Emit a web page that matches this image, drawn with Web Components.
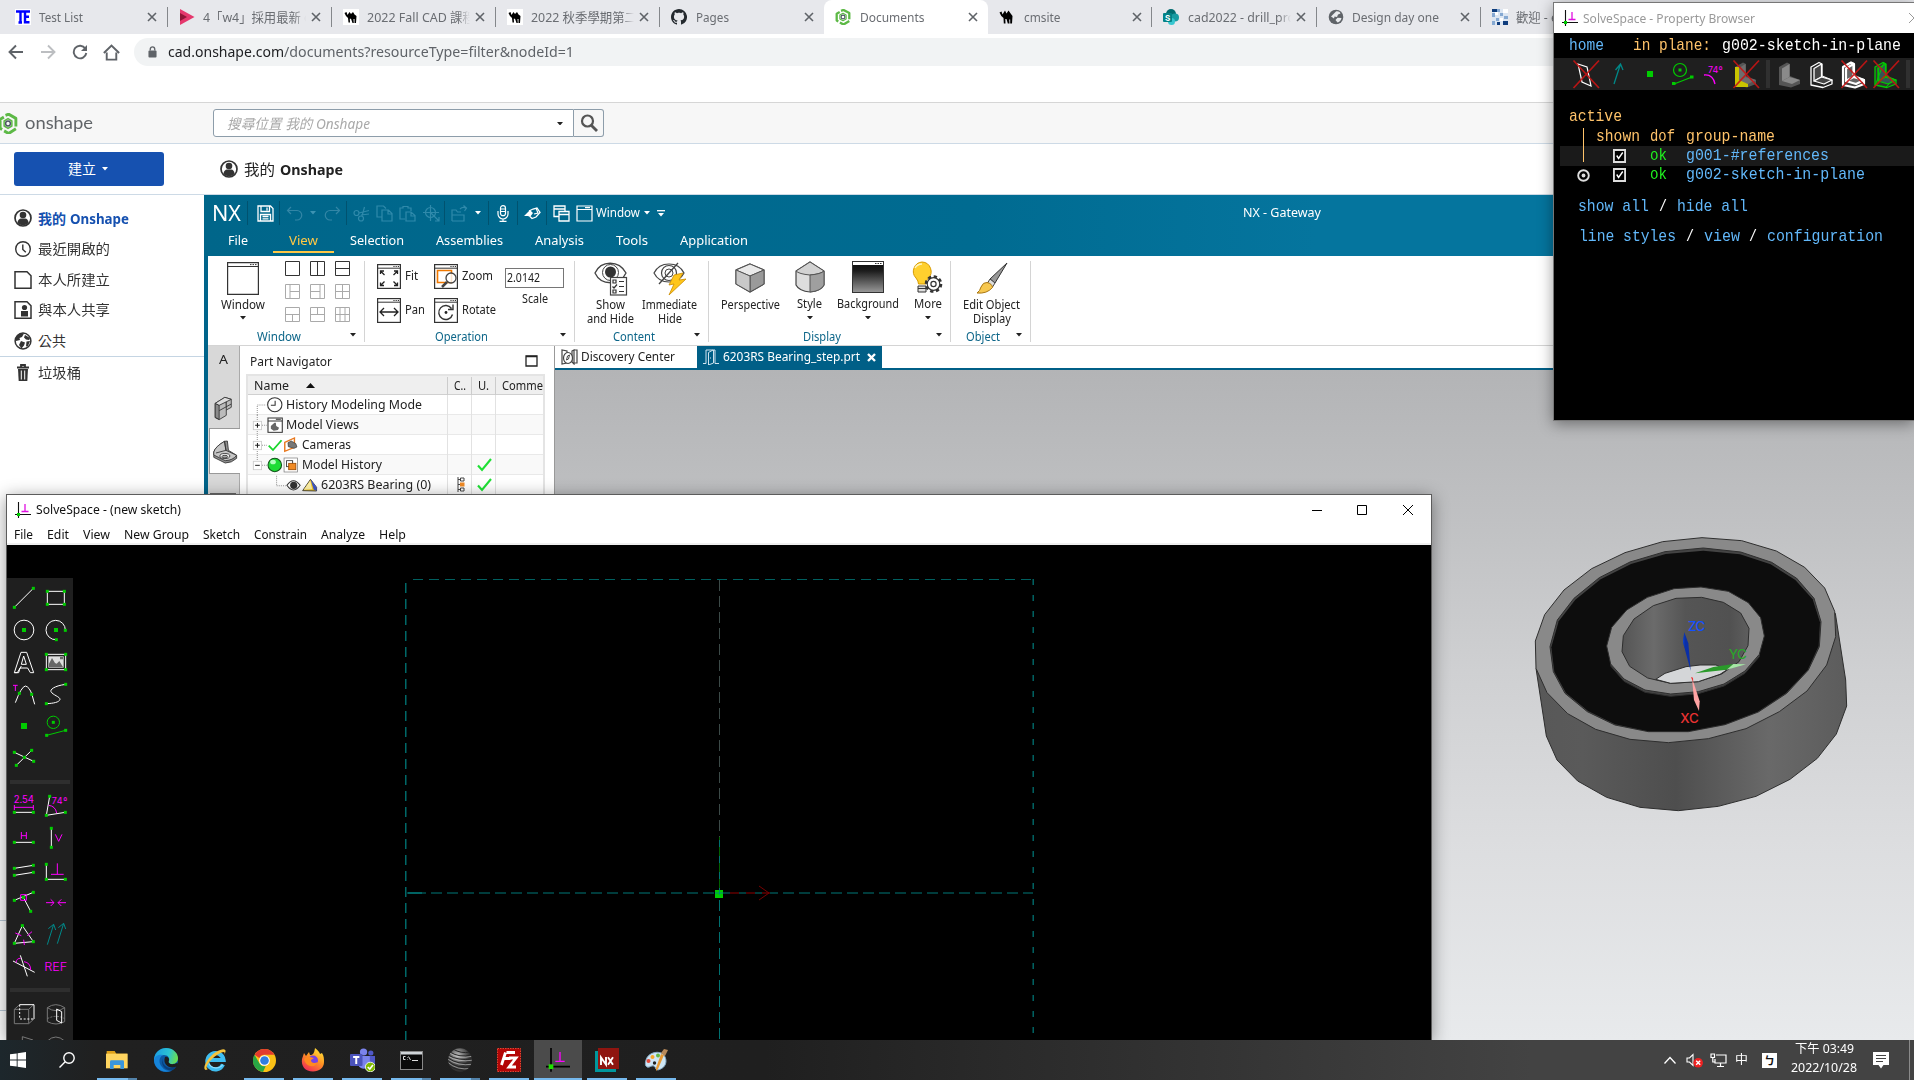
<!DOCTYPE html>
<html lang="zh-Hant">
<head>
<meta charset="utf-8">
<title>Documents</title>
<style>
html,body{margin:0;padding:0}
body{width:1914px;height:1080px;overflow:hidden;position:relative;background:#fff;font:12px/16px "Noto Sans","Noto Sans CJK TC",sans-serif;color:#222}
body>*{box-sizing:border-box}
chrome-window{width:1914px;height:1080px}
nx-window{position:absolute;left:204px;top:195px;width:1710px;height:845px}
sketch-window{position:absolute;left:6px;top:494px;width:1426px;height:546px}
property-window{position:absolute;left:1553px;top:2px;width:361px;height:419px}
task-bar{position:absolute;left:0;top:1040px;width:1914px;height:40px}
</style>
</head>
<body>
<chrome-window></chrome-window>
<nx-window></nx-window>
<sketch-window></sketch-window>
<property-window></property-window>
<task-bar></task-bar>
<script>
const BASE = `*{box-sizing:border-box}:host{display:block}.h{display:flex;align-items:center;flex:none}.v{display:flex;flex-direction:column;align-items:center;flex:none}.c{display:flex;align-items:center;flex:none}.top{align-items:flex-start}`;

/* ---------- layout helpers: cells laid end to end, gaps from start positions ---------- */
const cellHTML = (t, size) => /^\s*</.test(t) || t === '' ? t : `<fit-text w="${size}">${t}</fit-text>`;
const H = (origin, items, style = '', cls = '') => {
  let cur = origin;
  return `<div class="h ${cls}" style="${style}">` + items.map(([x, w, t, s = '']) => {
    const m = (x - cur).toFixed(2); cur = x + w;
    return `<div class="c" style="margin-left:${m}px;width:${w}px;${s}">${cellHTML(t, w)}</div>`;
  }).join('') + `</div>`;
};
const V = (origin, items, style = '') => {
  let cur = origin;
  return `<div class="v" style="${style}">` + items.map(([y, h, t, s = '']) => {
    const m = (y - cur).toFixed(2); cur = y + h;
    return `<div class="c" style="margin-top:${m}px;height:${h}px;${s}">${t}</div>`;
  }).join('') + `</div>`;
};
const F = (w, t, s = '') => `<fit-text w="${w}" style="${s}">${t}</fit-text>`;
const I = (n, s = '') => `<g-icon n="${n}" style="${s}"></g-icon>`;

/* ---------- icons: [viewBox, width, height, markup] ---------- */
const box = (x, y, w, h, sx, sy, d) => [`${x} ${y} ${w} ${h}`, w / sx, h / sy, d];
const W = 'fill="none" stroke="#fff" stroke-width="3"';
const M = 'fill="none" stroke="#f0f" stroke-width="3"';
const P = (...a) => { let s = ''; for (let i = 0; i < a.length; i += 2) s += `<rect x="${a[i] - 4.5}" y="${a[i + 1] - 4.5}" width="9" height="9" fill="#0c0"/>`; return s; };
const hexLogo = '<g fill="none" stroke-linejoin="round"><path d="M6 1.8 8.5.9l5.8 3.2v6.2M14.3 12l-5.8 3.6-3.6-2M3.3 12.6 1.7 11.6V4.8l3-1.7" stroke="#5db946" stroke-width="2.3"/><path d="M8 4.3l3.1 1.8v3.8L8 11.7l-3.1-1.8V6.1z" stroke="#5db946" stroke-width="1.2"/><circle cx="8" cy="8" r="1.9" stroke="#4b5563" stroke-width="1.1"/></g>';
const frame = (x, y, w, h) => `<rect x="${x}" y="${y}" width="${w}" height="${h}" fill="#fff" stroke="#333" stroke-width="1.2"/><path d="M${x} ${y + 3.6}h${w}" stroke="#333"/><path d="M${x + w - 7} ${y + 1.9}h1.2m1 0h1.2m1 0h1.2" stroke="#333"/>`;
const ICONS = {
  te: ['0 0 16 16', 16, 16, '<rect width="16" height="16" fill="#fff"/><path d="M1 2.500h14M5.500 2.500v11M3.500 13.500H7M14 7.800H9.500M10 3v10.300h4.500" stroke="#00f" stroke-width="2.400" fill="none"/>'],
  media: ['0 0 16 16', 16, 16, '<path d="M1 0 15.500 8 1 16z" fill="#e5386d"/><path d="M1 4v8l7-4z" fill="#8f1536"/>'],
  camelw: ['0 0 16 16', 16, 16, '<rect width="16" height="16" fill="#fff"/><path d="M1.500 4 3.500 3l1 3L6.500 3 8 5l2-2 1.500 2.500 2 1.500-.5 7h-1.500v-4h-1l.3 4H9.500L8 9.700H6.800L7 13.500H5.500L5 9 3 7z"/>'],
  camel: ['0 0 16 16', 16, 16, '<path d="M.5 3.500 2.500 2.500l1 3L6 1.500l1.500 3 2-3L12 5l1.500 2-.5 7.500h-1.800v-4h-1l.3 4H8.800L7.500 10H6.300l.2 4.500H4.800L4.500 9l-2.200-2z"/>'],
  github: ['0 0 16 16', 16, 16, '<path fill="#24292e" d="M8 0C3.580 0 0 3.580 0 8c0 3.540 2.290 6.530 5.470 7.590.4.070.55-.17.55-.38 0-.19-.01-.82-.01-1.490-2.010.37-2.530-.49-2.690-.94-.09-.23-.48-.94-.82-1.130-.28-.15-.68-.52-.01-.53.63-.01 1.080.58 1.230.82.72 1.210 1.870.87 2.330.66.07-.52.28-.87.51-1.070-1.780-.2-3.640-.89-3.640-3.950 0-.87.31-1.590.82-2.150-.08-.2-.36-1.020.08-2.120 0 0 .67-.21 2.200.82.64-.18 1.320-.27 2-.27s1.360.09 2 .27c1.530-1.040 2.200-.82 2.200-.82.44 1.100.16 1.920.08 2.120.51.56.82 1.270.82 2.150 0 3.070-1.870 3.750-3.650 3.950.29.25.54.73.54 1.480v2.200c0 .21.15.46.55.38A8 8 0 0 0 8 0z"/>'],
  onshape: ['0 0 16 16', 16, 16, hexLogo],
  onshapeBig: ['0 0 16 16', 20, 21, hexLogo],
  sharepoint: ['0 0 16 16', 16, 16, '<circle cx="8" cy="5" r="5" fill="#036c70"/><circle cx="12" cy="8.500" r="4" fill="#1a9ba1"/><circle cx="8.500" cy="12.500" r="3.500" fill="#37c6d0"/><rect y="4" width="9" height="9" rx="1" fill="#038387"/><text x="2" y="11.500" font-size="8" font-weight="700" fill="#fff">S</text>'],
  globe: ['0 0 16 16', 16, 16, '<circle cx="8" cy="8" r="7.300" fill="#5f6368"/><path d="M8 2.500c2-.5 4 .5 4.500 2L10 5.500 9 8 6.500 7.500 6 9.500l-3-2zM9.500 8.800l4 .2c-.5 2.500-2 4-4 4.500L7.500 11z" fill="#e8eaed"/>'],
  mosaic: ['0 0 16 16', 16, 16, '<rect width="16" height="16" fill="#dce6f2"/><path d="M0 0h5v3H0zM11 12h5v4h-5zM5 13h3v3H5z" fill="#0f3d7d"/><path d="M5 0h3v3H5zM0 4h3v4H0zM8 4h3v3H8zM4 9h3v3H4zM12 7h4v3h-4zM0 12h3v4H0z" fill="#86a9d2"/><path d="M3 3h3v3H3zM11 0h5v4h-5zM8 9h3v3H8z" fill="#fff"/>'],
  x: ['0 0 10 10', 10, 10, '<path d="M1 1l8 8M9 1 1 9" stroke="#5f6368" stroke-width="1.600"/>'],
  back: ['0 0 16 16', 16, 16, '<path d="M15 8H2M8 1.500 1.500 8 8 14.500" fill="none" stroke="#5f6368" stroke-width="1.900"/>'],
  fwd: ['0 0 16 16', 16, 16, '<path d="M1 8h13M8 1.500 14.500 8 8 14.500" fill="none" stroke="#bcbec1" stroke-width="1.900"/>'],
  reload: ['0 0 16 16', 16, 16, '<path d="M13.300 4.500A6.300 6.300 0 1 0 14.300 9" fill="none" stroke="#5f6368" stroke-width="1.900"/><path d="M15 1v6H9z" fill="#5f6368"/>'],
  home: ['0 0 16 16', 17, 17, '<path d="M3.500 8v6.700h9V8M.8 8.500 8 1.500l7.200 7" fill="none" stroke="#5f6368" stroke-width="1.800"/>'],
  lock: ['0 0 10 13', 9, 12, '<rect x=".5" y="5" width="9" height="7.500" rx="1" fill="#5f6368"/><path d="M2.500 5V3.500a2.500 2.500 0 0 1 5 0V5" fill="none" stroke="#5f6368" stroke-width="1.500"/>'],
  mag: ['0 0 18 18', 18, 18, '<circle cx="7.500" cy="7" r="5.500" fill="none" stroke="#555" stroke-width="2.200"/><path d="M11.500 11.500 17 17" stroke="#555" stroke-width="2.800"/>'],
  caret: ['0 0 8 5', 6, 3.5, '<path d="M0 0h8L4 5z" fill="currentColor"/>'],
  sort: ['0 0 9 5', 9, 5, '<path d="M0 5h9L4.500 0z" fill="#111"/>'],
  user: ['0 0 18 18', 18, 18, '<circle cx="9" cy="9" r="8" fill="#fff" stroke="#333" stroke-width="1.700"/><circle cx="9" cy="6" r="3.300" fill="#333"/><path d="M3.500 14c0-3 2-4.500 3.500-4.500h4c2 0 3.500 1.500 3.500 4.500-3 3-8 3-11 0z" fill="#333"/>'],
  clock: ['0 0 18 18', 18, 18, '<circle cx="9" cy="9" r="7.300" fill="none" stroke="#333" stroke-width="1.400"/><path d="M8.800 4.500v5l3 2.800" fill="none" stroke="#333" stroke-width="1.400"/>'],
  doc: ['0 0 18 18', 18, 18, '<path d="M1 .8h12l4 4v12.400H1z" fill="none" stroke="#333" stroke-width="1.500"/>'],
  share: ['0 0 18 18', 18, 18, '<path d="M1 .8h12l4 4v12.400H1z" fill="none" stroke="#333" stroke-width="1.500"/><circle cx="10.500" cy="6.500" r="2.600" fill="#333"/><path d="M7 15.500V10h7v5.500z" fill="#333"/>'],
  world: ['0 0 18 18', 18, 18, '<circle cx="9" cy="9" r="7.900" fill="#fff" stroke="#333" stroke-width="1.500"/><path d="M2 5C4 1 8 1 10 1.500L8 5 5.500 6 6 8 2 9zM11 3l5 3-1 2-3-.5-2-2zM7 9l4 1.500-1 3-2.500 3L5 13zM12.500 9.500l3.500-.5-2 5-2 .5z" fill="#333"/>'],
  trash: ['0 0 14 18', 14, 18, '<path d="M1 3.500h12M5 3V1h4v2" stroke="#333" stroke-width="1.800" fill="none"/><path d="M2 5h10l-.7 12H2.700z" fill="#333"/><path d="M5.300 6.500v9M8.700 6.500v9" stroke="#fff"/>'],
  /* NX quick access bar */
  save: ['0 0 17 17', 17, 17, '<path d="M1 1h12.500L16 3.500V16H1zM4 1.500v5h8.500v-5M3.500 16V9.500h10V16M5.500 11.500h6M5.500 13.800h6M10 2.500v3" fill="none" stroke="#fff" stroke-width="1.300"/>'],
  undo: ['0 0 17 17', 17, 17, '<path d="M5 2 1.500 5.500 5 9M1.500 5.500H11a4.700 4.700 0 0 1 0 9.500H9" fill="none" stroke="#3286a6" stroke-width="1.200"/>'],
  redo: ['0 0 17 17', 17, 17, '<path d="m12 2 3.500 3.500L12 9M15.500 5.500H6A4.700 4.700 0 0 0 6 15h2" fill="none" stroke="#3286a6" stroke-width="1.200"/>'],
  cut: ['0 0 17 17', 17, 17, '<g fill="none" stroke="#2f8aab" stroke-width="1.200"><circle cx="3.500" cy="8" r="2.500"/><circle cx="8" cy="13.500" r="2.500"/><path d="m6 8 10-2.500M16 9l-8 1M9 11 11.500 2"/></g>'],
  copy: ['0 0 17 17', 17, 17, '<path d="M6 12H1V1h6.500L10 3.500M6 5h6.500L16 8.500V16H6zM12 5v4h4" fill="none" stroke="#2f8aab" stroke-width="1.200"/>'],
  paste: ['0 0 17 17', 17, 17, '<path d="M6 14H1V3h3V1.500h5V3h3v3M7 7h5l4 3.500V16H7zM12 7v4h4" fill="none" stroke="#2f8aab" stroke-width="1.200"/>'],
  target: ['0 0 17 17', 17, 17, '<path d="M7.500 0v16M0 7.500h16M8 8l8 8M16 12v4h-4" fill="none" stroke="#2f8aab" stroke-width="1.200"/><circle cx="7.500" cy="7.500" r="5" fill="none" stroke="#2f8aab" stroke-width="1.200"/>'],
  exp: ['0 0 17 17', 17, 17, '<path d="M1 16V5h4l1.500 2H10M1 16h12v-6H1M9 4c2-2 4-2 6-1M12.500.5 15.500 3l-2 3" fill="none" stroke="#2f8aab" stroke-width="1.200"/>'],
  mic: ['0 0 12 17', 12, 17, '<g fill="none" stroke="#fff" stroke-width="1.200"><rect x="3.500" y=".7" width="5" height="10" rx="2.500"/><path d="M1 6v3a5 5 0 0 0 10 0V6M6 13.500V16M2.500 16.300h7M4 4h4M4 6.500h4"/></g>'],
  hand: ['0 0 17 17', 17, 17, '<path d="m5 6 4-2 4-1 3 4.500-4 4.500-4 1.500-2-2" fill="none" stroke="#fff" stroke-width="1.300"/><path d="m0 11 6-6 3 3-3 4-2-1z" fill="#fff"/><path d="m12 3 2 5-4 1" fill="none" stroke="#fff" stroke-width="1.200"/>'],
  wins: ['0 0 17 17', 17, 17, '<path d="M6 11.500H1V1h11v5M1 4h11M6 6.500h10V16H6zM6 9.500h10" fill="none" stroke="#fff" stroke-width="1.300"/>'],
  win: ['0 0 17 17', 17, 17, '<path d="M1 1h15v15H1zM1 4.500h15M9 2.700h5" fill="none" stroke="#fff" stroke-width="1.200"/>'],
  more: ['0 0 8 7', 8, 7, '<path d="M0 .7h8" stroke="#fff" stroke-width="1.300"/><path d="M1 3h6L4 6.500z" fill="#fff"/>'],
  /* NX ribbon */
  rwin: ['0 0 32 33', 32, 33, '<path d="M.6.600h30.800v31.800H.6zM.6 4.500h30.800" fill="#fff" stroke="#333" stroke-width="1.200"/><path d="M23 2.600h1.500M25.500 2.600H27M28 2.600h1.500" stroke="#333"/>'],
  fit: ['0 0 24 25', 24, 25, frame(.6, .6, 22.8, 23.8) + '<path d="M3.500 10V7H7M3.500 7l4 4M20.500 10V7H17M20.500 7l-4 4M3.500 18.500v3H7M3.500 21.500l4-4M20.500 18.500v3H17M20.500 21.500l-4-4" fill="none" stroke="#222" stroke-width="1.300"/>'],
  pan: ['0 0 24 25', 24, 25, frame(.6, .6, 22.8, 23.8) + '<path d="M3 14h18M7 10l-4 4 4 4M17 10l4 4-4 4" fill="none" stroke="#222" stroke-width="1.300"/>'],
  zoom: ['0 0 24 25', 24, 25, frame(.6, .6, 22.8, 23.8) + '<path d="M3.500 6.500h14v12h-14z" fill="none" stroke="#f07800" stroke-width="1.600"/><circle cx="17" cy="14" r="5" fill="#fff" fill-opacity=".8" stroke="#444" stroke-width="1.300"/><path d="m13 18-5 5" stroke="#444" stroke-width="2.500"/>'],
  rot: ['0 0 24 25', 24, 25, frame(.6, .6, 22.8, 23.8) + '<path d="M17.500 10.500a7 7 0 1 0 1 6M19 6.500v5h-5" fill="none" stroke="#333" stroke-width="1.400"/><circle cx="12" cy="14.500" r="1.400" fill="#222"/>'],
  show: ['0 0 34 34', 34, 34, '<path d="M1 11C7-2 25-2 32 11 26 24 7 24 1 11z" fill="#fff" stroke="#444" stroke-width="1.300"/><circle cx="16.500" cy="10.500" r="8" fill="#fff" stroke="#444"/><circle cx="16.500" cy="10" r="5.500" fill="#333"/><rect x="16.500" y="15.500" width="16" height="17.500" fill="#fff" stroke="#444" stroke-width="1.200"/><path d="M19 18h3v3h-3zM19 28h3v3h-3zM18.500 24.500l1.500 1.500 3-3.500M25 19.500h5M25 24.500h5M25 29.500h5" fill="none" stroke="#333" stroke-width="1.200"/>'],
  imm: ['0 0 34 34', 34, 34, '<path d="M1 11C7-1 25-1 31 11 25 23 7 23 1 11z" fill="#fff" stroke="#444" stroke-width="1.200"/><circle cx="16" cy="11" r="7.500" fill="none" stroke="#444" stroke-width="1.200"/><circle cx="16" cy="11" r="4" fill="none" stroke="#444"/><path d="M25 1 6 22" stroke="#444" stroke-width="1.300"/><path d="m21 13 9-2-4 7 7-1-17 16 5-11-5 1z" fill="#ffc61a" stroke="#c98a00" stroke-width=".8"/>'],
  persp: ['0 0 30 30', 30, 30, '<path d="M15 1 29 7v14L15 29 1 21V7z" fill="#ddd" stroke="#444" stroke-width="1.200"/><path d="M1 7l14 6 14-6L15 1z" fill="#e9e9e9" stroke="#555"/><path d="M15 13v16l14-8V7z" fill="#9a9a9a" stroke="#555"/><path d="M1 7l14 6v16L1 21z" fill="#c8c8c8" stroke="#555"/>'],
  style: ['0 0 30 32', 30, 32, '<path d="M15 1 29 10v14q-3 6-14 7Q4 30 1 24V10z" fill="#ddd" stroke="#444" stroke-width="1.200"/><path d="M1 10 15 1l14 9q-3 3-14 4Q4 13 1 10z" fill="#d2d2d2" stroke="#555"/><path d="M15 14v17q11-1 14-7V10q-3 3-14 4z" fill="#9f9f9f" stroke="#555"/>'],
  bg: ['0 0 32 32', 32, 32, '<defs><linearGradient id="a" x2="0" y2="1"><stop stop-color="#0b0b0b"/><stop offset=".3" stop-color="#1c1c1c"/><stop offset="1" stop-color="#999"/></linearGradient></defs><rect x=".5" y=".5" width="31" height="31" fill="url(#a)" stroke="#333"/><rect x="1" y="1" width="30" height="3" fill="#fff"/><path d="M23 2.500h1.500M25.500 2.500H27M28 2.500h1.500" stroke="#333"/>'],
  bulb: ['0 0 31 33', 31, 33, '<path d="M10 1a9.500 9.500 0 0 1 6 16.500Q14 20 14 23H6.500Q6.500 20 4 17A9.500 9.500 0 0 1 10 1z" fill="#ffd02e" stroke="#d79a00"/><path d="M6 25h8v6H6zM6 27.500h8" fill="#ddd" stroke="#333"/><path d="M3 7a8 8 0 0 1 7-4" stroke="#fff6c0" stroke-width="1.500" fill="none"/><circle cx="21.500" cy="23" r="7.300" fill="#fff" stroke="#333" stroke-width="3" stroke-dasharray="3.200 2.530"/><circle cx="21.500" cy="23" r="6.300" fill="#fff" stroke="#333" stroke-width="1.200"/><circle cx="21.500" cy="23" r="2.600" fill="none" stroke="#333" stroke-width="1.200"/>'],
  brush: ['0 0 32 32', 32, 32, '<path d="M31 1 19 21l-5-4z" fill="#999" stroke="#333"/><path d="m14 17 5 4-2.500 4-5-4z" fill="#ddd" stroke="#444"/><path d="M11 20.500q5 1 5.500 5Q11 32 1 31q3-2 4-6 2-5 6-4.500z" fill="#f7c850" stroke="#a97714"/>'],
  /* NX navigator */
  cubes: box(600, 618, 60, 75, 2.8, 3, '<g stroke="#333" stroke-width="2.500"><path d="M609 640 636 622l18 6v24l-14 8v16l-20 13-11-6z" fill="#bbb"/><path d="M609 640l11 6v42l-11-6zM636 634l4 2v24" fill="#8a8a8a"/><path d="M609 640 636 622l18 6-34 18zM620 662l34-20" fill="#ddd"/></g>'),
  part: box(595, 745, 75, 78, 2.8, 3, '<g stroke="#333" stroke-width="2.500" stroke-linejoin="round"><path d="M600 784q4-16 30-32l8-1 3 28 23 15v9q-14 14-32 14l-32-17z" fill="#8f8f8f"/><path d="M600 784q4-16 30-32l4 27 30 15q-10 15-32 16l-32-17z" fill="#c6c6c6"/><path d="M606 787l28-8M630 752l4 27" fill="none"/><ellipse cx="631" cy="796" rx="14" ry="7.500" fill="#f2f2f2"/><ellipse cx="631" cy="798" rx="8" ry="4" fill="#aaa"/></g>'),
  navmax: ['0 0 13 12', 13, 12, '<path d="M1 1h11v10H1z" fill="none" stroke="#222" stroke-width="1.300"/><path d="M1 1.500h11" stroke="#222" stroke-width="1.500"/>'],
  r1: box(694, 615, 100, 60, 2.8, 3, '<path d="M720 675v-30h25" fill="none" stroke="#999" stroke-width="3" stroke-dasharray="3 3"/><ellipse cx="769" cy="644" rx="20" ry="21" fill="#fff" stroke="#333" stroke-width="3"/><path d="M770 632v14h-12" fill="none" stroke="#333" stroke-width="3"/>'),
  r2: box(694, 675, 100, 60, 2.8, 3, '<path d="M720 675v60M733 706h14" fill="none" stroke="#999" stroke-width="3" stroke-dasharray="3 3"/><rect x="709" y="694" width="23" height="25" fill="#fff" stroke="#ccc" stroke-width="2.500"/><path d="M714 706h13M720.500 699v14" stroke="#222" stroke-width="3"/><rect x="750" y="684" width="40" height="43" fill="#fff" stroke="#333" stroke-width="3"/><path d="M750 693h40M772 688h14" stroke="#333" stroke-width="3"/><path d="M758 708l10-10h4l1 10 8 5-3 7-12 2-8-6z" fill="#666"/>'),
  r3: box(694, 735, 142, 60, 2.8, 3, '<path d="M720 735v60M733 766h14" fill="none" stroke="#999" stroke-width="3" stroke-dasharray="3 3"/><rect x="709" y="754" width="23" height="25" fill="#fff" stroke="#ccc" stroke-width="2.500"/><path d="M714 766h13M720.500 759v14" stroke="#222" stroke-width="3"/><path d="M752 767l12 13 24-29" fill="none" stroke="#19d62d" stroke-width="5"/><path d="M797 757l27-13v28l-27 12z" fill="#fff" stroke="#e8781e" stroke-width="4"/><path d="M806 758l9-5 13 8 3 10-8 4-16-5z" fill="#777" stroke="#333" stroke-width="2"/>'),
  r4: box(694, 795, 142, 60, 2.8, 3, '<path d="M720 795v17M733 826h14" fill="none" stroke="#999" stroke-width="3" stroke-dasharray="3 3"/><rect x="709" y="814" width="23" height="25" fill="#fff" stroke="#ccc" stroke-width="2.500"/><path d="M714 826h13" stroke="#222" stroke-width="3"/><ellipse cx="769" cy="825" rx="19" ry="20" fill="#1fdc35" stroke="#14531c" stroke-width="3"/><ellipse cx="764" cy="816" rx="8" ry="7" fill="#b4ffbe"/><rect x="795" y="804" width="38" height="42" fill="#fff" stroke="#777" stroke-width="2"/><rect x="802" y="812" width="17" height="18" fill="#fff" stroke="#333" stroke-width="2.500"/><rect x="808" y="820" width="20" height="19" fill="#f08a24" stroke="#9b4a00" stroke-width="2.500"/>'),
  r5: box(694, 855, 196, 60, 2.8, 3, '<path d="M774 857v30h26" fill="none" stroke="#999" stroke-width="3" stroke-dasharray="3 3"/><path d="M803 886q18-28 37 0-19 28-37 0z" fill="#fff" stroke="#333" stroke-width="3"/><ellipse cx="822" cy="886" rx="10" ry="11" fill="#333"/><path d="M847 902l22-34 17 24v11z" fill="#f5c71d" stroke="#333" stroke-width="2.500"/><path d="M869 868l17 24v10l-8-3z" fill="#4058c8"/><path d="M850 899l18-27 6 26z" fill="#fff2a8"/>'),
  chk: ['0 0 15 14', 15, 14, '<path d="M1 7.500 5 12l9-11" fill="none" stroke="#1fe035" stroke-width="2.100"/>'],
  tree: ['0 0 8 15', 8, 15, '<path d="M1 0v15M1 2.500h2M1 7.500h2M1 12.500h2" stroke="#444" fill="none"/><path d="M3.500 1h3.500v3H3.500zM3.500 11h3.500v3H3.500z" fill="#fff" stroke="#444"/><rect x="3" y="5.500" width="4.500" height="4" fill="#f08a24"/>'],
  disc: ['0 0 17 16', 17, 16, '<path d="M1 4V1l5 1v3M1 4v11l5-1M11 2l2-1v14l-2-2zM13 1h3v13h-3" fill="none" stroke="#444" stroke-width="1.200"/><ellipse cx="7" cy="9" rx="4.500" ry="5.500" fill="#fff" stroke="#444" stroke-width="1.200"/><path d="m5.500 11 1-4 2-1-1 4z" fill="none" stroke="#444"/>'],
  door: ['0 0 16 16', 16, 16, '<path d="M0 14.500h3V1h9v13.500h4M5.500 3.500 10 1M5.500 3.500V16l5-2V1M7 9h1" fill="none" stroke="#cfe3ee" stroke-width="1"/>'],
  bx: ['0 0 9 9', 9, 9, '<path d="m1 1 7 7M8 1 1 8" stroke="#fff" stroke-width="2.400"/>'],
  ss: ['0 0 16 16', 16, 16, '<path d="M3.500 0v16M0 12.500h16" stroke="#111" stroke-width="1.100"/><path d="M10 2v7M6.500 9.500h7" stroke="#e010e0" stroke-width="1.300"/><rect x="2" y="11" width="3" height="3" fill="#0c0"/>'],
  ssBig: box(318, 54, 72, 72, 3, 3, '<path d="M333 54v71M318 110h72" stroke="#000" stroke-width="5"/><path d="M360 66v28M346 94h28" stroke="#f0f" stroke-width="4"/><rect x="326" y="103" width="14" height="14" fill="#1fe000"/>'),
  wmin: ['0 0 10 10', 10, 10, '<path d="M0 5.500h10" stroke="#000"/>'],
  wmax: ['0 0 10 10', 10, 10, '<path d="M.5.500h9v9h-9z" fill="none" stroke="#000"/>'],
  wx: ['0 0 10 10', 10, 10, '<path d="m0 0 10 10M10 0 0 10" stroke="#000"/>'],
  wxg: ['0 0 10 10', 10, 10, '<path d="m0 0 10 10M10 0 0 10" stroke="#999"/>'],
  /* taskbar */
  start: ['0 0 16 16', 16, 16, '<path d="M0 2.300 6.700 1.400v6.200H0zM7.600 1.300 16 0v7.600H7.600zM0 8.400h6.700v6.200L0 13.700zM7.600 8.400H16V16l-8.400-1.300z" fill="#fff"/>'],
  search: ['0 0 16 16', 16, 16, '<circle cx="10" cy="6" r="5.200" fill="none" stroke="#fff" stroke-width="1.400"/><path d="M6.200 9.800.5 15.500" stroke="#fff" stroke-width="1.400"/>'],
  folder: box(318, 840, 66, 60, 3, 3, '<path d="M320 843h24l5 8h32v10h-61z" fill="#e0a21a"/><rect x="318" y="851" width="65" height="44" fill="#ffd560"/><path d="M330 897v-22q0-4 4-4h34q4 0 4 4v22h-11v-12h-20v12z" fill="#3a96dd"/>'),
  edge: ['0 0 24 24', 24, 24, '<defs><linearGradient id="a" x1="0" y1=".3" x2="1" y2=".5"><stop stop-color="#1b9de2"/><stop offset=".6" stop-color="#2bc3d2"/><stop offset="1" stop-color="#6be04d"/></linearGradient></defs><circle cx="12" cy="12" r="12" fill="#0c59a4"/><path d="M0 11C1 4 6 0 12 0c7 0 12 5 12 10 0 4-3 6-6 6-4 0-4-2-3-3 1-3-1-6-5-6-5 0-9 3-10 7z" fill="url(#a)"/><path d="M0 12c1-5 6-6 9-5-4 2-5 8-1 12 2 3 6 4 9 4-9 3-17-3-17-11z" fill="#1684d9"/><path d="M9 9c-2 4 1 10 7 11 3 0 5-1 6.500-2.500-1 2-2 3-4 4.500-7 2-13-6-9.500-13z" fill="#083f7c"/><path d="M11 9c3-1 5 2 3.500 4.500 0 2 3 4 8.500 1.500l1 1-1 2c-6 4-15-1-12-9z" fill="#1e1e1e"/>'],
  ie: ['0 0 24 24', 24, 24, '<path d="M20 16.500a8.200 8.200 0 1 1 .6-4.500H7" fill="none" stroke="#3fbdf0" stroke-width="4"/><path d="M19.800 16.500a8.200 8.200 0 0 1-14-1" fill="none" stroke="#8fe0ff" stroke-width="1.200"/><path d="M3 22C-2 21 5 9 13 4c8-5 12-3 8 3 2-4-1-4-7 0C6 12 1 21 5 21z" fill="#f5c33b"/>'],
  chrome: ['0 0 24 24', 23, 23, '<circle cx="12" cy="12" r="12" fill="#fbc116"/><path d="M12 0a12 12 0 0 1 10.400 6H12a6 6 0 0 0-5.500 3.500L1.600 6A12 12 0 0 1 12 0z" fill="#e33b2e"/><path d="M1.600 6 6.800 15a6 6 0 0 0 6.500 2.800L10.500 24A12 12 0 0 1 1.600 6z" fill="#28a745"/><circle cx="12" cy="12" r="5.600" fill="#fff"/><circle cx="12" cy="12" r="4.500" fill="#2f7de1"/>'],
  fox: ['0 0 24 24', 24, 24, '<defs><linearGradient id="a" x1=".8" y1="0" x2=".2" y2="1"><stop stop-color="#ffe63a"/><stop offset=".45" stop-color="#ff9322"/><stop offset="1" stop-color="#f0265a"/></linearGradient></defs><path d="M12 23.500C4 23.500 0 18 1 11L3 5l2 3 3-4 1 3c3 0 4-1 5-7 3 2 5 5 5 6l2-1c2 3 2 6 2 9 0 6-5 9.500-11 9.500z" fill="url(#a)"/><circle cx="12" cy="12.500" r="5" fill="#7542e5"/><path d="M3 11c3-3 6-2 10-1l-3 2c0 3 3 4 7 2-2 6-12 6-14-3z" fill="#ff8a1f"/>'],
  teams: ['0 0 24 24', 25, 24, '<circle cx="13" cy="4" r="3.500" fill="#7b83eb"/><circle cx="20" cy="5" r="2.500" fill="#5059c9"/><path d="M17 8h7v7c0 3-3 4-5 4h-2z" fill="#5059c9"/><path d="M8 8h11v8c0 5-9 7-11 1z" fill="#7b83eb"/><rect y="6" width="12" height="12" rx="1" fill="#4b53bc"/><path d="M3 9h6M6 9v7" stroke="#fff" stroke-width="1.900"/><circle cx="19.500" cy="19" r="4.800" fill="#7fba00" stroke="#fff" stroke-width=".8"/><path d="m17 19 2 2 3-4" fill="none" stroke="#fff" stroke-width="1.500"/>'],
  cmd: ['0 0 23 19', 23, 19, '<rect x=".5" y=".5" width="22" height="18" fill="#0a0a0a" stroke="#888"/><rect x="1" y="1" width="21" height="2.500" fill="#cfd4d8"/><path d="M5.500 5.500H3.500v3h2M7.500 6v.5M7.500 8v.5M8.500 5.500l2 3.500M12 9.500h6" stroke="#ddd" fill="none"/>'],
  ball: ['0 0 24 24', 24, 24, '<defs><radialGradient id="a" cx=".4" cy=".3"><stop stop-color="#bbb"/><stop offset=".6" stop-color="#666"/><stop offset="1" stop-color="#333"/></radialGradient><clipPath id="b"><circle cx="12" cy="12" r="11.800"/></clipPath></defs><circle cx="12" cy="12" r="11.800" fill="url(#a)"/><g clip-path="url(#b)" fill="none"><path d="M2 4q9 6 22 3M0 7q10 6 24 4M0 10q10 7 24 5M5 1q8 5 17 3M0 13q9 8 23 6M0 17q9 6 20 5" stroke="#262626"/><path d="M2 5.300q9 6 22 3M0 8.300q10 6 24 4M0 11.300q10 7 24 5M0 14.500q9 8 23 6" stroke="#d0d0d0" stroke-width=".6"/></g>'],
  fz: ['0 0 24 24', 24, 24, '<rect x=".5" y=".5" width="23" height="23" fill="#b30606" stroke="#e8402f" stroke-dasharray="1.500 1"/><path d="M9.500 4.500H18M4.500 17 8.500 4.500M6.500 10.500h7M12 10h7l-7 9h7" fill="none" stroke="#fff" stroke-width="2.800"/>'],
  nx: ['0 0 24 24', 24, 24, '<path d="M0 3h21v21H0z" fill="#00979d"/><rect x="3" width="21" height="21" fill="#8f1510"/><path d="M6 17V9.500l5 7V9M13 9.300l5 7.400M18 9.300l-5 7.400" stroke="#fff" stroke-width="1.900" fill="none"/>'],
  paint: ['0 0 24 24', 24, 24, '<path d="M2 12C4 4 16 2 20 7c4 6 2 13-6 15-3 0-2-3-4-4-3-1-4 2-7 1-2-1-2-4-1-7z" fill="#cfe6f5" stroke="#84aac6"/><circle cx="4.500" cy="13" r="2" fill="#e24a3b"/><circle cx="8.500" cy="9" r="2" fill="#f7a52a"/><circle cx="14" cy="7.500" r="2" fill="#63b846"/><circle cx="10.500" cy="15" r="1.700" fill="#222"/><path d="M20 7 14 21l-2 2 0-3L17 6z" fill="#e79a35"/><path d="M17 5l3-4 4 1-3 6z" fill="#b88a5a"/>'],
  up: ['0 0 12 8', 12, 8, '<path d="m.5 7.500 5.500-6 5.500 6" fill="none" stroke="#fff" stroke-width="1.300"/>'],
  spk: ['0 0 17 15', 17, 15, '<path d="M1 5h2.500L7 1.500v11L3.500 9H1z" fill="none" stroke="#fff" stroke-width="1.100"/><circle cx="12.200" cy="9.800" r="4.800" fill="#e22"/><path d="m10.200 7.800 4 4M14.200 7.800l-4 4" stroke="#fff" stroke-width="1.400"/>'],
  net: ['0 0 17 15', 17, 15, '<path d="M6 2h10v8H5V6M10.500 10v3.500M7 13.500h7M1 1h3.500v3.500H1zM2.800 4.500V9H5" fill="none" stroke="#fff" stroke-width="1.200"/>'],
  note: ['0 0 16 17', 16, 17, '<path d="M0 0h16v13h-5.500L8 16.500 5.500 13H0z" fill="#fff"/><path d="M3 3.500h10M3 6.500h10M3 9.500h7" stroke="#444"/>'],
  /* sketch toolbar */
  k0: box(24, 276, 96, 96, 3, 3, `<path d="M43 352 100 295" ${W}/>` + P(43, 352, 100, 295)),
  k1: box(120, 276, 96, 96, 3, 3, `<path d="M142 304h51v39h-51z" ${W}/>` + P(142, 304, 193, 304, 142, 343, 193, 343)),
  k2: box(24, 372, 96, 96, 3, 3, `<circle cx="72" cy="420" r="29.500" ${W}/><rect x="66" y="414" width="12" height="12" fill="#0c0"/>`),
  k3: box(120, 372, 96, 96, 3, 3, `<path d="M196 421A29 29 0 1 0 169 449" ${W}/><rect x="162" y="414" width="12" height="12" fill="#0c0"/>` + P(196, 421, 169, 449)),
  k4: box(24, 468, 96, 96, 3, 3, `<path d="M43 548h9l12-20M43 548 63 487h17l21 61H91l-8-14H60l-4 14zM71 498l-7 25h15z" ${W}/>`),
  k5: box(120, 468, 96, 96, 3, 3, `<path d="M139 493h58v46h-58z" ${W}/><rect x="145" y="499" width="46" height="34" fill="#ddd"/><path d="M147 531v-10l9-17 9 15 5 2 8-8 11 18zM180 501h9v7h-9z" fill="#666"/>` + P(139, 493, 197, 493, 139, 539, 197, 539)),
  k6: box(24, 564, 96, 96, 3, 3, `<path d="M46 638Q64 590 76 588 88 590 96 614L104 643" ${W}/><path d="M39 586h14M46 586v17" ${M}/>` + P(58, 610, 95, 613)),
  k7: box(120, 564, 96, 96, 3, 3, `<path d="M197 583C160 588 150 600 153 605 158 615 180 620 180 628 178 637 160 640 140 641" ${W}/>` + P(197, 583, 139, 641)),
  k8: box(24, 660, 96, 96, 3, 3, '<rect x="63" y="699" width="18" height="18" fill="#0c0"/>'),
  k9: box(120, 660, 96, 96, 3, 3, '<circle cx="160" cy="697" r="18.500" fill="none" stroke="#0c0" stroke-width="3"/><path d="M140 736l57-15" stroke="#0c0" stroke-width="3"/>' + P(160, 697, 140, 736, 197, 721)),
  k10: box(24, 756, 96, 96, 3, 3, `<path d="M43 787l58 27M49 826l46-45" ${W}/>` + P(43, 787, 101, 814, 49, 826, 95, 781, 73, 802)),
  m0: box(24, 57, 96, 96, 3, 3, `<text x="41" y="98" font-size="29" fill="#f0f" textLength="61" lengthAdjust="spacingAndGlyphs">2.54</text><path d="M43 105v15M100 105v15M43 112h57" ${M}/><path d="M43 127h57" ${W}/>` + P(43, 127, 100, 127)),
  m1: box(120, 57, 96, 96, 3, 3, `<text x="155" y="101" font-size="27" fill="#f0f" textLength="47">74º</text><path d="M149 79l-10 57 57-9" ${W}/><path d="M146 106q20 2 24 23" ${M}/>` + P(149, 79, 139, 136, 196, 127)),
  m2: box(24, 153, 96, 96, 3, 3, `<path d="M64 186v21M79 186v21M64 197h15" ${M}/><path d="M43 217h57" ${W}/>` + P(43, 217, 100, 217)),
  m3: box(120, 153, 96, 96, 3, 3, `<path d="M166 193l10 21 10-21" ${M}/><path d="M154 175v57" ${W}/>` + P(154, 175, 154, 232)),
  m4: box(24, 249, 96, 96, 3, 3, `<path d="M43 295l57-9M43 316l57-9" ${W}/>` + P(43, 295, 100, 286, 43, 316, 100, 307)),
  m5: box(120, 249, 96, 96, 3, 3, `<path d="M139 283v45h57" ${W}/><path d="M172 280v33M153 313h38" ${M}/>` + P(139, 283, 139, 328, 196, 328)),
  m6: box(24, 345, 96, 96, 3, 3, `<path d="M43 391l57-24M70 382l22 42" ${W}/><path d="M62 374h17v17H62z" ${M}/>` + P(43, 391, 100, 367, 92, 424, 70, 382)),
  m7: box(120, 345, 96, 96, 3, 3, `<path d="M138 398h24M152 388l10 10-10 10M198 398h-24M184 388l-10 10 10 10" ${M}/>`),
  m8: box(24, 441, 96, 96, 3, 3, `<path d="M67 467 43 520l57-5z" ${W}/><path d="M46 489l18 8M82 497l14-12M71 509l2 16" ${M}/>` + P(67, 467, 43, 520, 100, 515)),
  m9: box(120, 441, 96, 96, 3, 3, '<path d="M142 524l19-61M145 476l16-13 6 17M172 521l19-61M175 473l16-13 6 17" fill="none" stroke="#088" stroke-width="3"/>'),
  m10: box(24, 537, 96, 96, 3, 3, `<path d="M39 573l65 34M61 556l21 63" ${W}/><path d="M48 578q2-14 14-13M72 575q20 3 20 25" ${M}/>`),
  m11: box(120, 537, 96, 96, 3, 3, `<text x="133" y="603" font-size="36" font-weight="300" fill="#f0f" textLength="69" lengthAdjust="spacingAndGlyphs">REF</text>`),
  g0: box(24, 686, 96, 96, 3, 3, `<path d="M43 717h43v43H43zM43 717l16-14M86 760l16-14M86 717l15-14" fill="none" stroke="#777" stroke-width="3"/><path d="M59 703h43v43" ${W}/><path d="M59 703v43h43" ${W} stroke-dasharray="6 5"/>`),
  g1: box(120, 686, 96, 96, 3, 3, `<path d="M142 712q25-18 52 0v42q-26 14-52 0zM142 712q26 18 52 0" fill="none" stroke="#777" stroke-width="3"/><path d="M142 745q26-14 52 0" fill="none" stroke="#777" stroke-width="3" stroke-dasharray="6 4"/><path d="M170 750v-34l15 8v34z" ${W}/>`),
  g2: box(24, 782, 96, 96, 3, 3, '<path d="M67 811v-12l32 10" fill="none" stroke="#777" stroke-width="3"/>'),
  g3: box(120, 782, 96, 96, 3, 3, '<path d="M142 812q25-24 52 0" fill="none" stroke="#777" stroke-width="3"/>'),
};
const cross = '<path d="M3.500 2.500 29 30M29 2.500 3.500 30" stroke="#c81414" stroke-opacity=".9" stroke-width="1.700"/>';
const lb = (side, front, st, extra = '', sw = 1.3) => `<g stroke="${st}" stroke-width="${sw}" stroke-linejoin="round"><path d="M5 9 13 4.500l3 1.500v12l10 4v4l-9 3.500L5 27z" fill="${side}"/><path d="M8 10.500 15.500 6v13L8 23z" fill="${front}"/><path d="M15.500 19 26 22l-8 4-10-3z" fill="${front}"/></g>${extra}`;
Object.assign(ICONS, {
  p0: ['0 0 32 32', 32, 32, `<path d="m8 6 9 3 4 19-9-4z" fill="none" stroke="#fff" stroke-width="1.200"/>` + cross],
  p1: ['0 0 32 32', 32, 32, '<path d="M12 26 18.500 6M13.500 12 18.500 6l2.500 6" fill="none" stroke="#088" stroke-width="1.300"/>'],
  p2: ['0 0 32 32', 32, 32, '<rect x="13" y="13" width="6" height="6" fill="#0c0"/>'],
  p3: ['0 0 32 32', 32, 32, '<circle cx="14" cy="12" r="6.500" fill="none" stroke="#0c0" stroke-width="1.200"/><path d="m8 26 18-7" stroke="#0c0" stroke-width="1.200"/><path d="M12.500 10.500h3v3h-3zM6 24h3.500v3H6zM24 17.500h3.500v3H24z" fill="#0c0"/>'],
  p4: ['0 0 32 32', 32, 32, '<text x="10" y="15" font-size="9" fill="#f0f">74º</text><path d="M6 17q9-1 11 9" fill="none" stroke="#f0f" stroke-width="1.300"/>'],
  p5: ['0 0 32 32', 32, 32, lb('#555', '#6e6e6e', 'none', '<path d="M5 9h4v13l9 4v3H5z" fill="#c9c400"/>') + cross],
  p6: ['0 0 32 32', 32, 32, lb('#555', '#8a8a8a', 'none')],
  p7: ['0 0 32 32', 32, 32, lb('#222', '#444', '#fff')],
  p8: ['0 0 32 32', 32, 32, lb('#444', '#666', '#fff', '', 2.2) + cross],
  p9: ['0 0 32 32', 32, 32, lb('#333', '#355', '#0c0', '<path d="M5 28 14 4M8 9l1 14M14 18 5 28M16 29l8-8" stroke="#0c0"/>') + cross],
  cb: ['0 0 14 14', 13, 14, '<rect x="1" y="1" width="12" height="12" fill="#000" stroke="#ddd" stroke-width="2"/><path d="m4 6.500 2 3 4.500-6" fill="none" stroke="#fff" stroke-width="1.500"/>'],
  rb: ['0 0 13 13', 13, 13, '<circle cx="6.500" cy="6.500" r="5.300" fill="none" stroke="#ddd" stroke-width="1.900"/><circle cx="6.500" cy="6.500" r="1.900" fill="#ddd"/>'],
});
[['', 0], ['M7.500 0v15', 0], ['M0 7.500h15', 0], ['M5 0v15M5 7.500h10', 1], ['M10 0v15M0 7.500h10', 1], ['M7.500 0v15M0 7.500h15', 1], ['M0 7.500h15M7.500 7.500V15', 1], ['M0 7.500h15M7.500 0v7.500', 1], ['M5 0v15M10 0v15M0 7.500h15', 1]]
  .forEach(([d, dim], i) => { ICONS['l' + i] = ['0 0 15 15', 15, 15, `<path d="M.5.500h14v14H.5z${d}" fill="none" stroke="${dim ? '#aaa' : '#333'}"/>`]; });

class GIcon extends HTMLElement {
  connectedCallback() {
    if (this.shadowRoot) return;
    const [vb, w, h, d] = ICONS[this.getAttribute('n')];
    this.attachShadow({ mode: 'open' }).innerHTML =
      `<style>:host{display:inline-flex;flex:none}svg{display:block;font-family:Inter,sans-serif;overflow:hidden}</style><svg width="${w}" height="${h}" viewBox="${vb}" preserveAspectRatio="none">${d}</svg>`;
  }
}
customElements.define('g-icon', GIcon);

/* one line of text, set to a given width */
class FitText extends HTMLElement {
  connectedCallback() {
    if (!this.shadowRoot) this.attachShadow({ mode: 'open' }).innerHTML =
      `<style>:host{display:inline-block;flex:none;white-space:nowrap}span{display:inline-block;transform-origin:0 50%;white-space:pre}</style><span><slot></slot></span>`;
    const w = +this.getAttribute('w');
    this.style.width = w + 'px';
    const s = this.shadowRoot.querySelector('span');
    const fit = () => { s.style.transform = 'none'; const n = s.getBoundingClientRect().width; if (n) s.style.transform = `scaleX(${w / n})`; };
    fit();
    document.fonts.ready.then(fit);
  }
}
customElements.define('fit-text', FitText);

class ChromeTab extends HTMLElement {
  connectedCallback() {
    const on = this.hasAttribute('active');
    this.attachShadow({ mode: 'open' }).innerHTML = `<style>${BASE}
:host{display:flex;align-items:center;flex:none;width:164.150px;height:34px;padding-left:11px;color:#6a6d72;font-size:13px;${on ? 'background:#fff;border-radius:8px 8px 0 0;' : ''}}
.t{width:103px;margin-left:8.500px;overflow:hidden;-webkit-mask-image:linear-gradient(90deg,#000 88%,transparent)}
.s{width:1px;height:20px;margin-left:auto;background:${this.hasAttribute('plain') || on ? 'transparent' : '#84878b'}}</style>
${I(this.getAttribute('icon'))}<div class="t"><slot></slot></div>${I('x', 'margin-left:5px')}<i class="s"></i>`;
  }
}
customElements.define('chrome-tab', ChromeTab);

class ChromeWindow extends HTMLElement {
  connectedCallback() {
    const tab = (ic, w, t, a = '') => `<chrome-tab icon="${ic}" ${a}><fit-text w="${w}">${t}</fit-text></chrome-tab>`;
    const nav = (ic, rest) => H(0, [[14, 18, I(ic)], ...rest], 'height:18px');
    this.attachShadow({ mode: 'open' }).innerHTML = `<style>${BASE}
.tabs{display:flex;height:34px;padding-left:3.500px;background:#e7e8ec;overflow:hidden}
.bar{height:68px}
.hdr{height:42px;background:#f7f7f7;border-top:1px solid #d6d6d6;border-bottom:1px solid #cddae6;padding-top:6px}
.sub{height:51px;border-bottom:1px solid #cddae6;padding-top:8px}
.side{width:204px;font-size:14px;color:#333}
</style>
<div class="tabs">${tab('te', 44, 'Test List')}${tab('media', 107, '4「w4」採用最新 c')}${tab('camelw', 108, '2022 Fall CAD 課程')}${tab('camelw', 106, '2022 秋季學期第二')}${tab('github', 33, 'Pages', 'plain')}${tab('onshape', 64.5, 'Documents', 'active')}${tab('camel', 36.5, 'cmsite')}${tab('sharepoint', 107, 'cad2022 - drill_pro')}${tab('globe', 87, 'Design day one')}${tab('mosaic', 42, '歡迎 - e')}</div>
<div class="bar">${H(0, [[8, 16, I('back')], [40, 16, I('fwd')], [72, 16, I('reload')], [103, 17, I('home')],
      [134, 1780, H(134, [[148, 9, I('lock')], [168, 116, 'cad.onshape.com', 'color:#202124;padding-bottom:2px'], [284, 290, '/documents?resourceType=filter&amp;nodeId=1', 'padding-bottom:2px']], 'font-size:15px;color:#5f6368'), 'background:#f1f3f4;height:28px;border-radius:14px 0 0 14px']], 'height:36px')}</div>
<div class="hdr">${H(0, [[-2, 20, I('onshapeBig')], [25, 68, '<fit-text w="68" style="font:18px/22px Lato,sans-serif;color:#606468">onshape</fit-text>', 'padding-bottom:3px'],
      [213, 361, H(214, [[227, 143, '<fit-text w="143" style="font-style:italic;color:#a9a9a9;font-size:14px">搜尋位置 我的 Onshape</fit-text>'], [557, 7, I('caret')]], 'padding-top:1px'), 'border:1px solid #8d9daa;height:28px;background:#fff;border-radius:3px 0 0 3px'],
      [574, 30, I('mag', 'margin-left:6px'), 'border:1px solid #8d9daa;border-left:0;height:28px;border-radius:0 3px 3px 0']], 'height:28px')}</div>
<div class="sub">${H(0, [[14, 150, H(14, [[68, 28, '建立'], [102, 8, I('caret')]]), 'background:#1651b0;color:#fff;border-radius:3px;height:34px;font-size:14px'], [220, 18, I('user')],
      [244, 31, '我的'], [280, 63, '<fit-text w="63" style="font-weight:700">Onshape</fit-text>']], 'height:34px;font-size:15px;color:#222')}</div>
<div class="side">${V(195, [
      [209, 18, nav('user', [[38, 28, '我的', 'padding-top:1px'], [70, 59, 'Onshape', 'padding-top:1px']]), 'width:204px;color:#1651b0;font-weight:700'],
      [240, 18, nav('clock', [[38, 72, '最近開啟的']]), 'width:204px'],
      [270.5, 18, nav('doc', [[38, 72, '本人所建立']]), 'width:204px'],
      [301, 18, nav('share', [[38, 72, '與本人共享']]), 'width:204px'],
      [332, 18, nav('world', [[38, 28, '公共']]), 'width:204px'],
      [356, 1, '', 'width:204px;background:#c5d5e3'],
      [364, 18, H(0, [[16, 14, I('trash')], [38, 43, '垃圾桶']]), 'width:204px'],
      [920, 1, '', 'width:204px;background:#b9c8d6'],
      [1010, 1, '', 'width:204px;background:#b9c8d6']])}</div>`;
  }
}
customElements.define('chrome-window', ChromeWindow);

class NxViewport extends HTMLElement {
  connectedCallback() {
    this.attachShadow({ mode: 'open' }).innerHTML = `<style>:host{display:block;position:relative;flex:1;background:linear-gradient(#b3b4b6 0,#bfc0c2 21%,#cfd0d2 45%,#dcdddf 70%,#e8eaec 100%)}
svg{position:absolute;left:945px;top:140px;font-family:Inter,sans-serif}</style>
<svg width="414" height="330" viewBox="0 0 1242 990">
<defs><linearGradient id="s"><stop stop-color="#585858"/><stop offset=".15" stop-color="#5a5a5a"/><stop offset=".45" stop-color="#4e4e4e"/><stop offset=".75" stop-color="#696969"/><stop offset="1" stop-color="#5c5c5c"/></linearGradient>
<linearGradient id="h"><stop stop-color="#555"/><stop offset=".25" stop-color="#6b6b6b"/><stop offset=".5" stop-color="#555"/><stop offset=".85" stop-color="#515151"/><stop offset="1" stop-color="#5e5e5e"/></linearGradient></defs>
<g stroke="#2e2e2e" stroke-width="3">
<path fill="url(#s)" d="M108 475 139 678 171 750 233 813 320 862 420 892 535 902 655 889 768 859 870 808 952 745 1009 672 1040 588 1037 510 1006 310z"/>
<path fill="#898989" d="M106 393 134 314 192 240 275 176 375 128 488 95 606 83 725 92 829 123 914 172 974 234 1004 304 1007 380 980 465 921 543 838 605 738 656 625 686 505 698 390 688 287 658 203 611 141 548 108 475z"/>
<path fill="#444" d="M150 410 172 330 222 265 298 203 390 156 495 125 610 114 722 126 815 157 890 205 942 265 963 335 958 410 925 480 860 550 775 606 675 644 565 665 445 665 345 645 262 605 195 550 160 485z"/>
<path fill="#0d0d0d" stroke="none" d="M154 412 176 334 226 269 302 208 393 162 497 132 610 122 720 133 812 163 886 210 938 268 960 337 956 408 923 480 858 549 773 605 674 643 565 664 445 664 345 643 264 603 198 549 163 485z"/>
<path fill="#444" d="M332 468 372 514 435 547 512 559 595 551 672 528 735 490 778 440V425H332z"/>
<path fill="#898989" d="M320 408 335 352 380 300 442 262 522 236 603 231 685 244 745 278 782 323 793 378 778 433 735 483 672 522 595 545 512 552 435 540 372 507 332 462z"/>
<path fill="url(#h)" d="M366 425 370 377 402 327 460 287 528 265 605 262 670 277 722 309 747 355 744 407 717 455 665 492 595 515 512 520 443 504 389 469z"/>
<path fill="#d4d6d8" d="M467 508 495 490 558 470 600 465 648 465 680 480 660 493 595 515 512 520z"/></g>
<path fill="#0a2fa8" d="M553 367 565 400 572 482 553 412 549 395z"/><path fill="#0f43c8" d="M553 367 549 395 553 412z"/>
<path fill="#2a9a2a" d="M585 490 640 471 700 462 680 479z"/><path fill="#a5e8a5" d="M700 462 738 463 680 479z"/>
<path fill="#e33" d="M573 501 579 503 580 520z"/><path fill="#ffa3a3" d="M577 515 581 518 599 574 597 603 582 570z"/>
<text x="564" y="363" font-size="40" font-weight="500" fill="#1450ff" textLength="52">ZC</text><text x="686" y="447" font-size="40" font-weight="500" fill="#2ca32c" textLength="54">YC</text><text x="541" y="639" font-size="40" font-weight="500" fill="#e83232" textLength="55">XC</text>
</svg>`;
  }
}
customElements.define('nx-viewport', NxViewport);

class NxWindow extends HTMLElement {
  connectedCallback() {
    const sep = x => [x, 1, '', 'height:24px;background:#00526f'];
    const gsep = x => [x, 1, '', 'height:81px;background:#d4d4d4;margin-top:5px'];
    const car = I('caret', 'color:#222');
    const lab = (x0, x1, lx, lw, t, cx) => H(x0, [[lx, lw, F(lw, t, 'color:#0d6689')], [cx - 3, 6, car, 'padding-bottom:3px']], 'height:17px;width:' + (x1 - x0) + 'px');
    const group = (x0, x1, body, l) => [x0, x1 - x0, `<div>${body}${l}</div>`];
    const grid = V(256, [0, 1, 2].map(r => [261 + 23 * r, 15, H(285, [0, 1, 2].map(c => [285 + 25 * c, 15, I('l' + (r * 3 + c))]))]));
    const body = (x0, items) => `<div style="height:72px">${H(x0, items, '', 'top')}</div>`;
    const line = x => [x, 1, '', 'height:20px;background:#e2e2e2'];
    const cellRow = (bg, icon, tx, tw, t, c = '', u = '') => `<div class="row" style="background:${bg}">${H(248, [[248, tx - 248, icon], [tx, tw, t], line(447), [457, 8, c], line(471), [476.5, 15, u], line(495)], 'height:19px')}</div>`;
    this.attachShadow({ mode: 'open' }).innerHTML = `<style>${BASE}
:host{display:flex;flex-direction:column;background:#fff;overflow:hidden}
.top0{height:61px;background:linear-gradient(90deg,#00668a,#006b91 45%,#05759e 65%);color:#fff}
.below{display:flex;flex:1;min-height:0}
.edge{width:4px;background:#00648a}
.main{flex:1;display:flex;flex-direction:column;min-width:0}
.rib{height:90px;border-bottom:1px solid #d4d4d4;display:flex;align-items:flex-start}
.work{flex:1;display:flex;min-height:0}
.rail{width:32px;background:#d8d8d8;border-right:1px solid #aaa}
.sel{width:31px;height:46px;background:#fff;border:1px solid #999;border-right:0;margin-left:2px}
.nav{width:314px;padding:0 0 0 6px}
.tbl{width:299px;height:200px;border:2px solid #e4e4e4;border-bottom:0;overflow:hidden}
.th{height:19px;background:#efefef;border-bottom:1px solid #d0d0d0}
.row{height:20px;border-bottom:1px solid #e9e9e9}
.view{flex:1;display:flex;flex-direction:column;border-left:1px solid #999}
.vtabs{height:24px;border-bottom:2px solid #005f87}
</style>
<div class="top0">
${H(204, [[212, 29, '<fit-text w="29" style="font-size:22px;line-height:26px">NX</fit-text>', 'padding-bottom:2px'], sep(247), [256.5, 17, I('save')], sep(279), [286, 17, I('undo')], [310, 6, I('caret', 'color:#3d93b2')], [324, 17, I('redo')], sep(346), [353, 17, I('cut')], [376, 17, I('copy')], [399, 17, I('paste')], [423, 17, I('target')], sep(444), [451, 17, I('exp')], [475, 7, I('caret')], sep(488), [497, 12, I('mic')], sep(517), [524, 17, I('hand')], sep(546), [553, 17, I('wins')], [576, 17, I('win')], [596, 44, 'Window'], [644, 6, I('caret')], [657, 8, I('more')], [1243, 78, 'NX - Gateway']], 'height:36px;white-space:nowrap')}
${H(204, [[228, 20, 'File', 'padding-bottom:3px'], [273, 61, '<fit-text w="29" style="margin-left:16px;color:#ffc845">View</fit-text>', 'height:23px;border-bottom:2px solid #ffc845;padding-bottom:1px'], [350, 54, 'Selection', 'padding-bottom:3px'], [436, 67, 'Assemblies', 'padding-bottom:3px'], [535, 49, 'Analysis', 'padding-bottom:3px'], [616, 32, 'Tools', 'padding-bottom:3px'], [680, 68, 'Application', 'padding-bottom:3px']], 'height:23px;margin-top:-1px;font-size:13px')}
</div>
<div class="below"><div class="edge"></div><div class="main">
<div class="rib">${H(208, [
      group(208, 364, body(208, [[221, 44, V(256, [[262, 33, I('rwin')], [297, 16, F(44, 'Window')], [316, 4, car]], 'width:44px')], [285, 65, grid]]), lab(208, 364, 257, 44, 'Window', 353)), gsep(364),
      group(365, 574, body(365, [
        [377, 50, V(256, [[264, 24, H(377, [[377, 24, I('fit')], [405, 13, 'Fit']]), 'width:50px'], [298, 24, H(377, [[377, 24, I('pan')], [405, 20, 'Pan']]), 'width:50px']])],
        [434, 63, V(256, [[264, 24, H(434, [[434, 24, I('zoom')], [462, 31, 'Zoom']]), 'width:63px'], [298, 24, H(434, [[434, 24, I('rot')], [462, 34, 'Rotate']]), 'width:63px']])],
        [505, 59, V(256, [[268, 20, F(33, '2.0142', 'margin-left:1px'), 'width:59px;border:1px solid #767676'], [291, 16, F(26, 'Scale')]])]]), lab(365, 574, 435, 53, 'Operation', 563)), gsep(574),
      group(575, 708, body(575, [
        [587, 47, V(256, [[262, 34, I('show')], [297, 16, F(29, 'Show')], [311, 16, F(47, 'and Hide')]], 'width:47px')],
        [642, 55, V(256, [[262, 34, I('imm')], [297, 16, F(55, 'Immediate')], [311, 16, F(24, 'Hide')]], 'width:55px')]]), lab(575, 708, 613, 42, 'Content', 697)), gsep(708),
      group(709, 950, body(709, [
        [721, 59, V(256, [[263, 30, I('persp')], [297, 16, F(59, 'Perspective')]], 'width:58px')],
        [794, 31, V(256, [[261, 32, I('style')], [296, 16, F(25, 'Style')], [315.5, 4, car]], 'width:31px')],
        [837, 63, V(256, [[261, 32, I('bg')], [296, 16, F(62, 'Background')], [315.5, 4, car]], 'width:62px')],
        [912, 32, V(256, [[261, 33, I('bulb')], [296, 16, F(28, 'More')], [315.5, 4, car]], 'width:31px')]]), lab(709, 950, 803, 38, 'Display', 939)), gsep(950),
      group(951, 1030, body(951, [[963, 57, V(256, [[262, 32, I('brush')], [297, 16, F(57, 'Edit Object')], [311, 16, F(38, 'Display')]], 'width:57px')]]), lab(951, 1030, 966, 34, 'Object', 1019)), gsep(1030)], '', 'top')}</div>
<div class="work">
<div class="rail">${V(346, [[351, 16, F(9, 'A', 'font-size:13px')], [396, 25, I('cubes')], [428, 46, `<div class="sel">${I('part', 'padding:10px 0 0 2px')}</div>`], [493, 3, '', 'width:26px;background:#666']], 'width:30px')}</div>
<div class="nav">
${H(246, [[250, 82, 'Part Navigator'], [525, 13, I('navmax')]], 'height:28px;padding-top:1px;font-size:13px')}
<div class="tbl"><div class="th">${H(248, [[254, 35, 'Name'], [306, 9, I('sort')], [447, 1, '', 'height:18px;background:#ccc'], [454, 12, 'C..'], [471, 1, '', 'height:18px;background:#ccc'], [478, 11, 'U.'], [495, 1, '', 'height:18px;background:#ccc'], [502, 41, 'Comme']], 'height:18px;padding-top:1px')}</div>
${cellRow('#fff', I('r1'), 286, 136, 'History Modeling Mode')}
${cellRow('#f9f9f9', I('r2'), 286, 73, 'Model Views')}
${cellRow('#fff', I('r3'), 302, 49, 'Cameras')}
${cellRow('#f9f9f9', I('r4'), 302, 80, 'Model History', '', I('chk'))}
${cellRow('#fff', I('r5'), 321, 110, '6203RS Bearing (0)', I('tree'), I('chk'))}
</div></div>
<div class="view"><div class="vtabs">${H(555, [[560.5, 17, I('disc')], [581, 94, 'Discovery Center'], [697, 185, H(697, [[703, 16, I('door')], [723, 137, '6203RS Bearing_step.prt'], [866.5, 9, I('bx')]]), 'height:22px;background:#005f87;color:#fff']], 'height:22px')}</div><nx-viewport></nx-viewport></div>
</div></div></div>`;
  }
}
customElements.define('nx-window', NxWindow);

class SketchWindow extends HTMLElement {
  connectedCallback() {
    const menu = [['File', 14, 19], ['Edit', 47, 22], ['View', 83, 27], ['New Group', 124, 65], ['Sketch', 203, 37], ['Constrain', 254, 53], ['Analyze', 321, 44], ['Help', 379, 27]];
    const cells = (p, n) => `<div class="g">${Array.from({ length: n }, (_, i) => I(p + i)).join('')}</div>`;
    this.attachShadow({ mode: 'open' }).innerHTML = `<style>${BASE}
:host{display:flex;flex-direction:column;border:1px solid #5c5c5c;border-bottom:0;background:#fff;color:#111;box-shadow:0 3px 16px rgba(0,0,0,.42)}
.body{flex:none;display:flex;align-items:flex-start;background:#000;overflow:hidden;height:495px}
.tools{flex:none;width:66px;height:462px;margin-top:33px;background:#1f1f1f;padding:4px 0 0 1px;overflow:hidden}
.g{display:flex;flex-wrap:wrap;width:64px}
.r{width:60px;height:4px;background:#2e2e2e;margin-left:2px}
svg{display:block}
</style>
${H(7, [[15, 16, I('ss')], [36, 145, '<fit-text w="145" style="font-size:13px">SolveSpace - (new sketch)</fit-text>', 'padding-bottom:1px'], [1312, 10, I('wmin')], [1357, 10, I('wmax')], [1403, 10, I('wx')]], 'height:29px')}
${H(7, menu.map(([t, x, w]) => [x, w, t]), 'height:21px;padding-top:2px;border-bottom:2px solid #f0f0f0;font-size:12.500px')}
<div class="body"><div class="tools">${cells('k', 11)}<div class="r" style="margin-top:6px;margin-bottom:5px"></div>${cells('m', 12)}<div class="r" style="margin-top:7px;margin-bottom:7px"></div>${cells('g', 4)}</div>
<svg width="1358" height="495" viewBox="73 545 1358 495"><g fill="none" shape-rendering="crispEdges">
<path d="M413 579.500H1033" stroke="#006060" stroke-dasharray="10 6"/>
<path d="M405.500 583V1040" stroke="#006868" stroke-dasharray="10 6"/><path d="M406.500 583V1040" stroke="#003434" stroke-dasharray="10 6"/>
<path d="M1032.500 579V1033" stroke="#003434" stroke-dasharray="6 10"/><path d="M1033.500 579V1033" stroke="#006060" stroke-dasharray="6 10"/>
<path d="M407 893H1033" stroke="#003c3c" stroke-width="2" stroke-dasharray="11 5" stroke-dashoffset="8"/>
<path d="M408 893H422" stroke="#006464" stroke-width="2"/>
<path d="M719.500 580V840" stroke="#3c4a48" stroke-dasharray="11 5"/>
<path d="M719.500 837V890" stroke="#006000"/><path d="M719.500 840V890" stroke="#007070" stroke-dasharray="7 9"/>
<path d="M719.500 900V1039" stroke="#007070" stroke-dasharray="11 5"/>
<path d="M730 893H770" stroke="#480000" stroke-width="2" stroke-dasharray="9 7"/></g>
<path d="m759 886 10 7-10 7" fill="none" stroke="#780000"/><rect x="715" y="890" width="8" height="8" fill="#0c0"/><path d="M715 893h8M719.500 890v5" stroke="#008878"/></svg></div>`;
  }
}
customElements.define('sketch-window', SketchWindow);

class PropertyWindow extends HTMLElement {
  connectedCallback() {
    const m = (x, w, t, c) => [x, w, F(w, t, 'color:' + c)];
    const B = '#62b8fa', O = '#ffc36a', G = '#20f020', Y = '#fff';
    this.attachShadow({ mode: 'open' }).innerHTML = `<style>${BASE}
:host{display:flex;flex-direction:column;border:1px solid #777;border-right:0;background:#000;box-shadow:0 3px 14px rgba(0,0,0,.4);font:17px/20px "Liberation Mono",monospace}
.t{font:13px/16px "Noto Sans",sans-serif;color:#999;background:#fff;height:30px}
.bar{background:#1f1f1f;height:32px}
.tree{background:linear-gradient(${O},${O}) 29px 6px/1px 41px no-repeat}
</style>
<div class="t">${H(1554, [[1562, 16, I('ss')], [1583, 172, 'SolveSpace - Property Browser', 'padding-bottom:1px'], [1909, 10, I('wxg')]], 'height:30px;overflow:hidden')}</div>
${H(1554, [m(1569, 35, 'home', B), m(1633, 78, 'in plane:', O), m(1722, 179, 'g002-sketch-in-plane', Y)], 'height:25px;padding-top:1px')}
<div class="bar">${H(1554, [...[0, 1, 2, 3, 4, 5].map(i => [1570 + 32 * i, 32, I('p' + i, 'margin-top:-1px')]), [1766, 4, '', 'height:28px;background:#303030'], ...[6, 7, 8, 9].map(i => [1774 + 32 * (i - 6), 32, I('p' + i, 'margin-top:-1px')]), [1906, 4, '', 'height:28px;background:#303030']], 'height:32px')}</div>
<div style="height:17px"></div>
${H(1554, [m(1569, 53, 'active', O)], 'height:20px')}
<div style="margin-top:-5px;padding-top:4px" class="tree">
${H(1554, [m(1596, 44, 'shown', O), m(1650, 25, 'dof', O), m(1686, 89, 'group-name', O)], 'height:21px')}
${H(1554, [[1560, 354, H(1560, [[1613, 14, I('cb')], m(1650, 17, 'ok', G), m(1686, 143, 'g001-#references', B)]), 'height:20px;background:linear-gradient(' + O + ',' + O + ') 23px 0/1px 16px no-repeat #1a1a1a']], 'height:20px;margin-top:-1px')}</div>
${H(1554, [[1577, 13, I('rb')], [1613, 14, I('cb')], m(1650, 17, 'ok', G), m(1686, 179, 'g002-sketch-in-plane', B)], 'height:20px;margin-top:-1px')}
${H(1554, [m(1578, 71, 'show all', B), m(1659, 8, '/', Y), m(1677, 71, 'hide all', B)], 'height:20px;margin-top:12px')}
${H(1554, [m(1579, 97, 'line styles', B), m(1686, 8, '/', Y), m(1704, 36, 'view', B), m(1749, 8, '/', Y), m(1767, 116, 'configuration', B)], 'height:20px;margin-top:10px')}`;
  }
}
customElements.define('property-window', PropertyWindow);

class TaskBar extends HTMLElement {
  connectedCallback() {
    const L = '#76b9ed';
    const app = (n, st = 0) => `<div class="a ${st === 3 ? 'on' : ''}">${I(n)}<i style="background:${st === 0 ? 'transparent' : st === 2 ? `linear-gradient(90deg,${L} 78%,#5383aa 78%)` : L}"></i></div>`;
    this.attachShadow({ mode: 'open' }).innerHTML = `<style>${BASE}
:host{display:flex;background:linear-gradient(90deg,#1d272c 0,#202020 5%,#1f1f1f 40%,#353535 65%,#434343 80%,#434343);color:#fff}
.apps{display:flex;gap:9px}.s{display:flex;align-items:center;justify-content:center;height:40px}
.a{width:40px;height:40px;display:flex;flex-direction:column;align-items:center;justify-content:center;position:relative}
.a i{display:block;position:absolute;left:0;right:0;bottom:0;height:2px}.on{width:48px;margin:0 -4px;background:#4b4b4b}
.tray{margin-left:auto}
</style><div class="s" style="width:36px">${I('start')}</div><div class="s" style="width:61px">${I('search')}</div>
<div class="apps">${app('folder', 2)}${app('edge')}${app('ie')}${app('chrome', 1)}${app('fox', 1)}${app('teams', 1)}${app('cmd', 2)}${app('ball', 2)}${app('fz', 1)}${app('ssBig', 3)}${app('nx', 1)}${app('paint', 1)}</div>
<div class="tray">${H(1660, [[1664, 12, I('up')], [1686, 17, I('spk')], [1710, 17, I('net')], [1735, 13, '中'], [1762, 15, '<fit-text w="11" style="margin-left:2px;font:700 11px/14px \'Noto Sans CJK TC\',sans-serif;color:#111">ㄅ</fit-text>', 'height:15px;background:#fff'],
      [1791, 66, V(1040, [[1041, 16, F(59, '下午 03:49')], [1060, 16, F(66, '2022/10/28')]], 'width:66px;height:40px')], [1873, 16, I('note')], [1909, 1, '', 'height:40px;background:#8a8a8a'], [1910, 4, '']], 'height:40px')}</div>`;
  }
}
customElements.define('task-bar', TaskBar);
</script>
</body>
</html>
